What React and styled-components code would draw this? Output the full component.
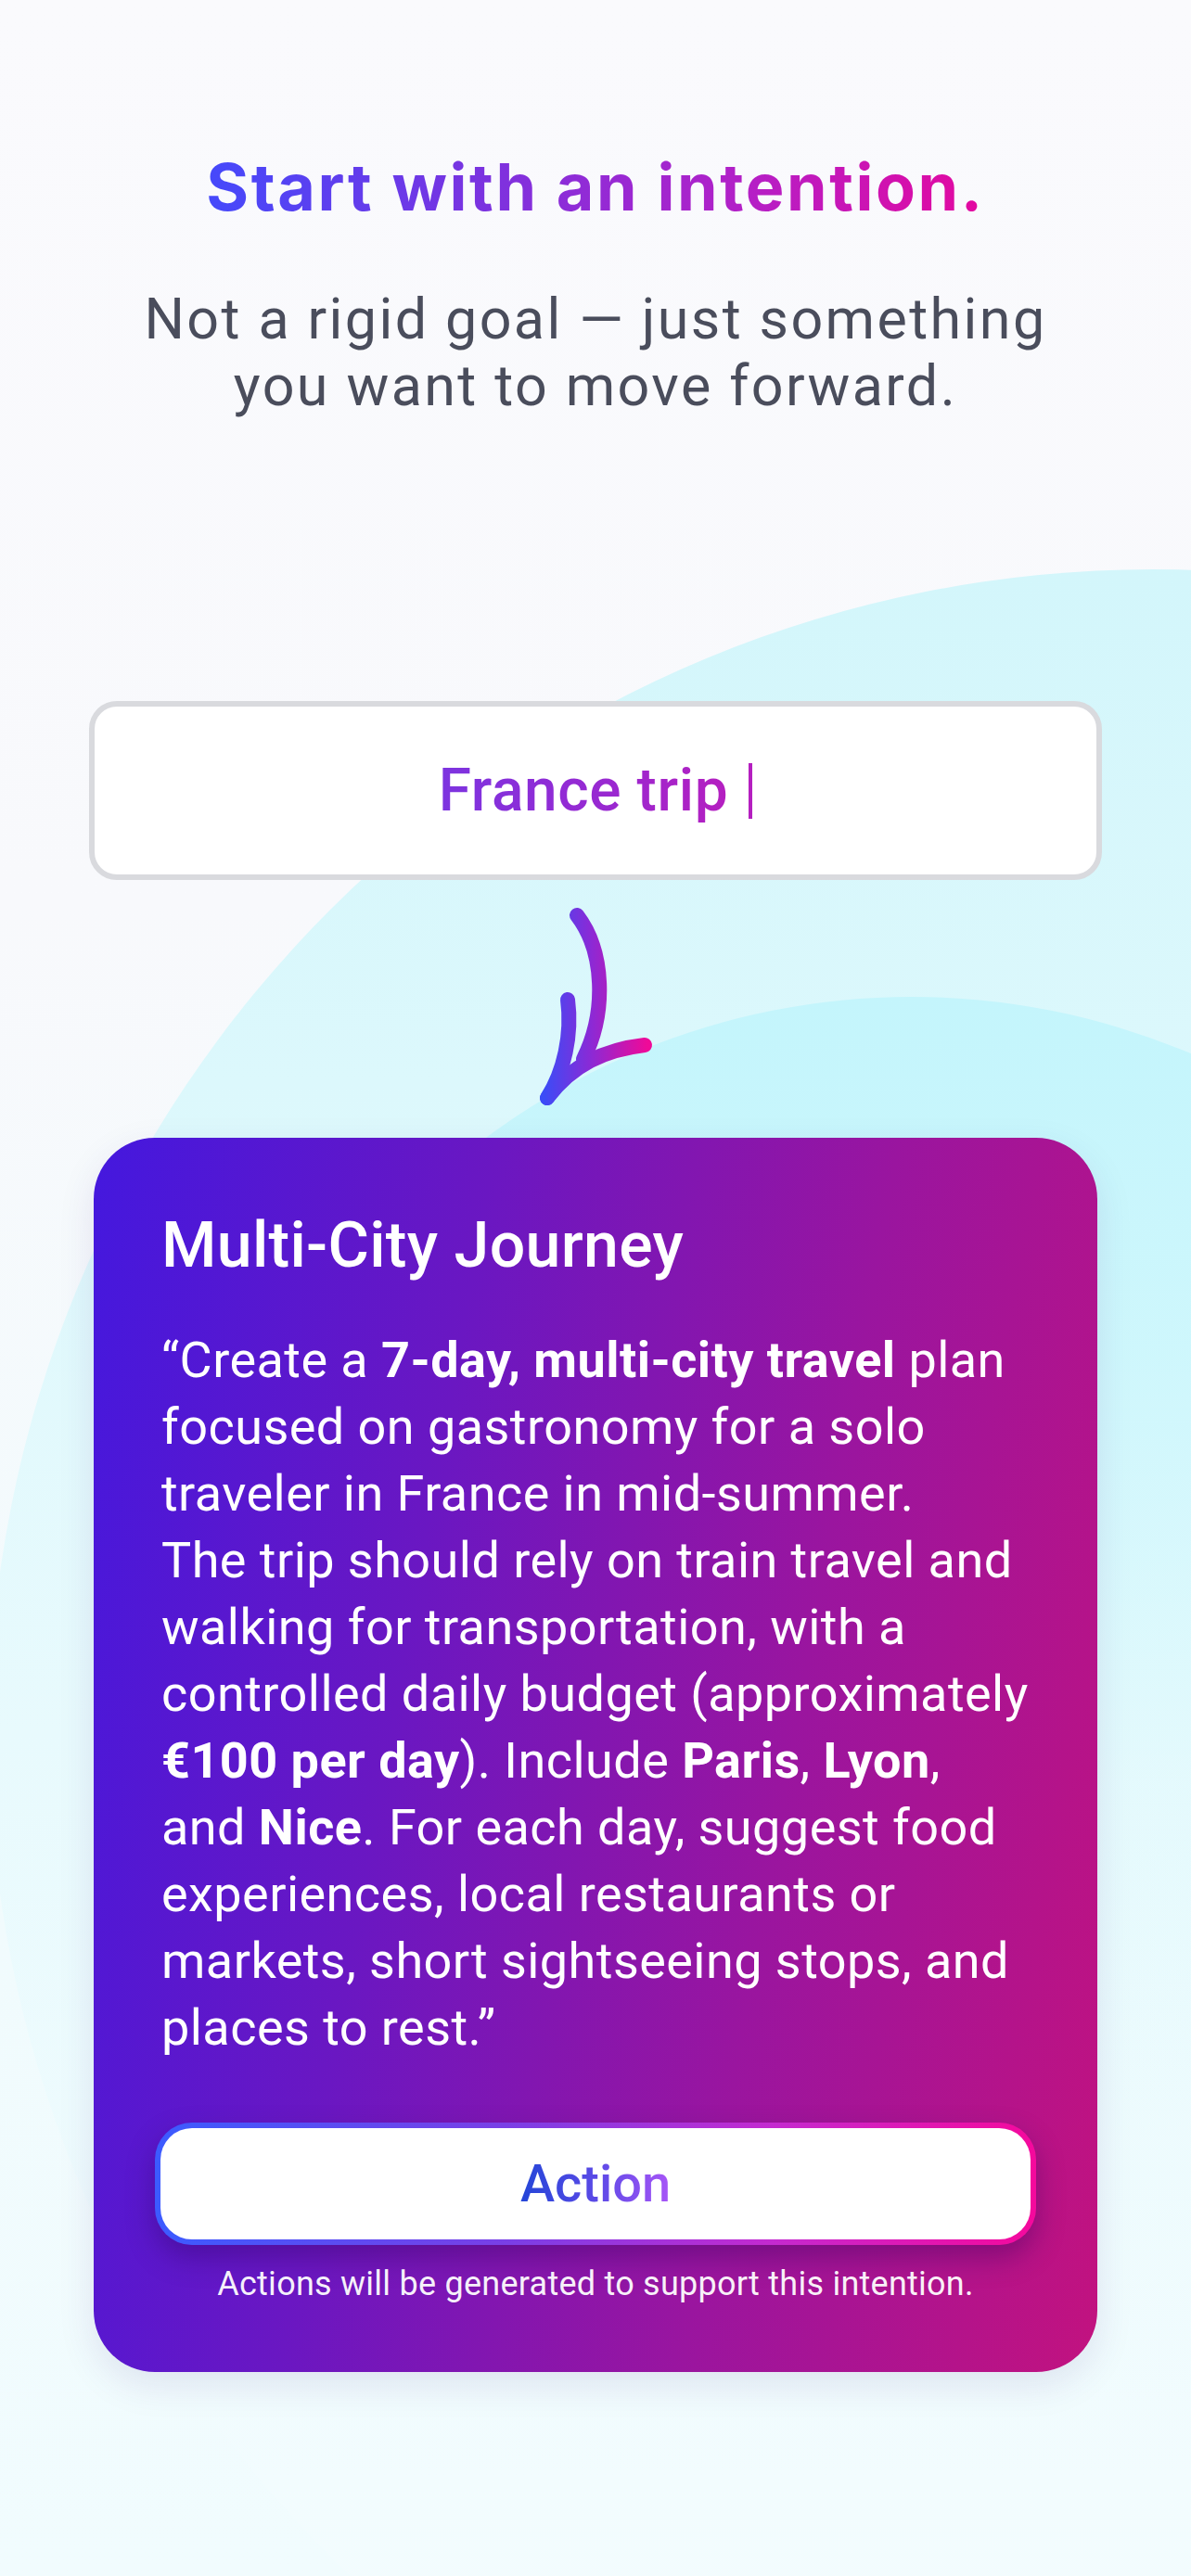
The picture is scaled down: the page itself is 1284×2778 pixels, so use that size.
import React from "react";
import styled, { createGlobalStyle } from "styled-components";

const GlobalStyle = createGlobalStyle`
  html, body { margin: 0; padding: 0; background: #fafafd; }
  * { box-sizing: border-box; }
  body { font-family: Roboto, "Noto Sans", Arial, sans-serif; -webkit-font-smoothing: antialiased; }
`;

const Page = styled.div`
  position: relative;
  width: 1284px;
  min-height: 2778px;
  overflow: hidden;
  background: linear-gradient(180deg, #fafafd 0%, #f8f9fc 35%, #f1fbfd 75%, #f1fcfe 100%);
  &::before {
    content: "";
    position: absolute;
    left: -12px;
    top: 614px;
    width: 2510px;
    height: 2510px;
    border-radius: 50%;
    background: linear-gradient(180deg, #d3f6fb 0%, #dcf8fc 22%, #e8fafd 50%, #f2fcfe 82%, #f4fcfe 100%);
    z-index: 0;
  }
  &::after {
    content: "";
    position: absolute;
    left: 213px;
    top: 1075px;
    width: 1540px;
    height: 1540px;
    border-radius: 50%;
    background: linear-gradient(180deg, #c4f5fc 0%, rgba(200, 246, 252, 0.75) 25%, rgba(215, 248, 252, 0.25) 55%, rgba(230, 250, 253, 0) 80%);
    z-index: 0;
  }
`;

const Content = styled.main`
  position: relative;
  z-index: 1;
  display: flex;
  flex-direction: column;
  align-items: center;
  padding-top: 160px;
`;

const Title = styled.h1`
  margin: 0;
  font-family: Inter, Roboto, sans-serif;
  font-weight: 700;
  font-size: 70px;
  line-height: 84px;
  letter-spacing: 2.6px;
  background: linear-gradient(90deg, #4549fb 0%, #7a33e0 35%, #b51fc6 70%, #e4089f 100%);
  -webkit-background-clip: text;
  background-clip: text;
  color: transparent;
`;

const Subtitle = styled.p`
  margin: 64px 0 0;
  font-family: Roboto, sans-serif;
  font-weight: 400;
  font-size: 61px;
  line-height: 72px;
  letter-spacing: 2.4px;
  color: #4a4d5c;
  text-align: center;
`;

const InputBox = styled.div`
  margin-top: 304px;
  width: 1092px;
  height: 193px;
  border: 6px solid #d9dade;
  border-radius: 30px;
  background: #ffffff;
  display: flex;
  align-items: center;
  justify-content: center;
`;

const InputText = styled.span`
  font-family: Roboto, sans-serif;
  font-size: 64px;
  font-weight: 500;
  line-height: 72px;
  letter-spacing: 0.6px;
  background: linear-gradient(90deg, #7c34e0 0%, #9a28d0 60%, #b51fc0 100%);
  -webkit-background-clip: text;
  background-clip: text;
  color: transparent;
`;

const Caret = styled.span`
  display: inline-block;
  width: 4px;
  height: 60px;
  margin-left: 22px;
  background: #b51fc0;
`;

const ArrowWrap = styled.div`
  margin-top: 25px;
  width: 140px;
  height: 230px;
`;

const Card = styled.section`
  margin-top: 23px;
  width: 1082px;
  border-radius: 66px;
  padding: 76px 73px 71px;
  background: linear-gradient(100deg, #4418de 0%, #6a17c2 33%, #9a159f 66%, #c2127f 100%);
  box-shadow: 0 14px 40px rgba(60, 20, 120, 0.1);
  color: #ffffff;
  display: flex;
  flex-direction: column;
`;

const CardTitle = styled.h2`
  margin: 0;
  font-family: Roboto, sans-serif;
  font-weight: 500;
  font-size: 68px;
  line-height: 80px;
  letter-spacing: 0.3px;
`;

const Body = styled.p`
  margin: 48px 0 0;
  font-family: Roboto, sans-serif;
  font-weight: 400;
  font-size: 54px;
  line-height: 72px;
  letter-spacing: 0.45px;
  white-space: nowrap;
`;

const Line = styled.span`
  display: block;
`;

const Strong = styled.b`
  font-weight: 700;
`;

const ActionButton = styled.button`
  margin: 66px -7px 0;
  height: 132px;
  border: 6px solid transparent;
  border-radius: 40px;
  background:
    linear-gradient(#ffffff, #ffffff) padding-box,
    linear-gradient(90deg, #3b5bff 0%, #7a3fe6 40%, #c42ad0 70%, #f5099c 100%) border-box;
  box-shadow: 0 14px 30px rgba(40, 0, 90, 0.35);
  display: flex;
  align-items: center;
  justify-content: center;
  cursor: pointer;
  padding: 0;
`;

const ActionLabel = styled.span`
  font-family: Roboto, sans-serif;
  font-weight: 500;
  font-size: 56px;
  line-height: 64px;
  background: linear-gradient(90deg, #2446d8 0%, #5a4ae6 50%, #a855f7 100%);
  -webkit-background-clip: text;
  background-clip: text;
  color: transparent;
`;

const Caption = styled.p`
  margin: 18px 0 0;
  font-family: Roboto, sans-serif;
  font-size: 36px;
  line-height: 48px;
  letter-spacing: 0.25px;
  text-align: center;
  color: rgba(255, 255, 255, 0.95);
`;

const bodyLines = [
  [["\u201CCreate a "], ["7-day, multi-city travel", true], [" plan"]],
  [["focused on gastronomy for a solo"]],
  [["traveler in France in mid-summer."]],
  [["The trip should rely on train travel and"]],
  [["walking for transportation, with a"]],
  [["controlled daily budget (approximately"]],
  [["\u20AC100 per day", true], ["). Include "], ["Paris", true], [", "], ["Lyon", true], [","]],
  [["and "], ["Nice", true], [". For each day, suggest food"]],
  [["experiences, local restaurants or"]],
  [["markets, short sightseeing stops, and"]],
  [["places to rest.\u201D"]],
];

function CurvedArrow() {
  return (
    <svg width="140" height="230" viewBox="0 0 140 230" fill="none">
      <defs>
        <linearGradient id="arrowGrad" x1="14" y1="0" x2="126" y2="0" gradientUnits="userSpaceOnUse">
          <stop offset="0" stopColor="#3b4cf7" />
          <stop offset="0.45" stopColor="#8a2ad6" />
          <stop offset="1" stopColor="#ef0a98" />
        </linearGradient>
      </defs>
      <g stroke="url(#arrowGrad)" strokeWidth="16" strokeLinecap="round" strokeLinejoin="round">
        <path d="M50 13 C80 52, 82 118, 57 168" />
        <path d="M40 104 C45 142, 36 182, 18 210" />
        <path d="M18 210 C45 174, 80 158, 123 153" />
      </g>
    </svg>
  );
}

export default function App() {
  return (
    <>
      <GlobalStyle />
      <Page>
        <Content>
          <Title>Start with an intention.</Title>
          <Subtitle>
            Not a rigid goal — just something
            <br />
            you want to move forward.
          </Subtitle>
          <InputBox>
            <InputText>France trip</InputText>
            <Caret />
          </InputBox>
          <ArrowWrap>
            <CurvedArrow />
          </ArrowWrap>
          <Card>
            <CardTitle>Multi-City Journey</CardTitle>
            <Body>
              {bodyLines.map((segs, i) => (
                <Line key={i}>
                  {segs.map(([t, b], j) => (b ? <Strong key={j}>{t}</Strong> : <React.Fragment key={j}>{t}</React.Fragment>))}
                </Line>
              ))}
            </Body>
            <ActionButton type="button">
              <ActionLabel>Action</ActionLabel>
            </ActionButton>
            <Caption>Actions will be generated to support this intention.</Caption>
          </Card>
        </Content>
      </Page>
    </>
  );
}
